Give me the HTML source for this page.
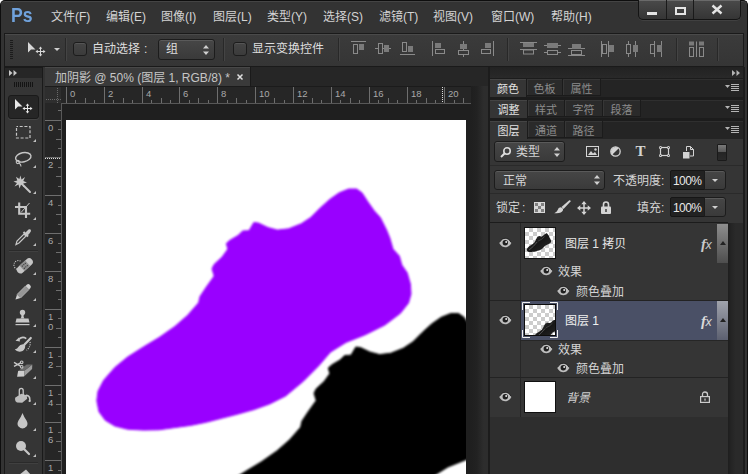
<!DOCTYPE html><html><head><meta charset="utf-8"><title>Photoshop</title><style>
*{box-sizing:border-box;margin:0;padding:0}
html,body{width:748px;height:474px;overflow:hidden;background:#fff}
body{position:relative;font-family:"Liberation Sans","Noto Sans CJK SC",sans-serif;font-size:12px;color:#d4d4d4;line-height:1}
.a{position:absolute}
.t{position:absolute;white-space:nowrap;line-height:16px;height:16px}
svg{position:absolute;overflow:visible}
.menu .t{color:#d4d4d4;font-size:12px}
.ptab{position:absolute;height:17px;line-height:20px;overflow:hidden;font-size:11px;text-align:center;color:#8c8c8c;background:#2a2a2a;border:1px solid #1b1b1b;border-top:none;border-left:none;box-shadow:inset 1px 1px 0 #363636}
.ptab.on{background:#353535;color:#e2e2e2;height:18px;border-bottom:none;box-shadow:inset 0 1px 0 #444}
.prow{position:absolute;left:490px;width:253px;height:18px;background:#242424;box-shadow:inset 0 1px 0 #2f2f2f}
.sep{position:absolute;width:1px;background:#282828;box-shadow:1px 0 0 #444}
.cb{position:absolute;width:14px;height:14px;border-radius:3px;background:linear-gradient(#454545,#3b3b3b);border:1px solid #1c1c1c;box-shadow:inset 0 1px 0 #555}
.dd{position:absolute;border-radius:3px;background:linear-gradient(#464646,#3a3a3a);border:1px solid #1c1c1c;box-shadow:inset 0 1px 0 #5a5a5a}
.inp{position:absolute;background:#222;border:1px solid #161616;border-radius:2px 0 0 2px}
</style></head><body>
<div class="a" style="left:0;top:0;width:748px;height:474px;background:#333;border:1px solid #0e0e0e;border-bottom:none;border-radius:5px 5px 0 0;box-shadow:inset 0 1px 0 #444"></div>
<div class="t" style="left:11px;top:2.500px;font-size:21px;line-height:24px;height:24px;font-weight:bold;color:#70a2dc;transform:scaleX(0.84);transform-origin:0 0">Ps</div>
<div class="menu">
<div class="t" style="left:51px;top:9px">文件(F)</div>
<div class="t" style="left:106px;top:9px">编辑(E)</div>
<div class="t" style="left:161px;top:9px">图像(I)</div>
<div class="t" style="left:213px;top:9px">图层(L)</div>
<div class="t" style="left:267px;top:9px">类型(Y)</div>
<div class="t" style="left:323px;top:9px">选择(S)</div>
<div class="t" style="left:379px;top:9px">滤镜(T)</div>
<div class="t" style="left:433px;top:9px">视图(V)</div>
<div class="t" style="left:491px;top:9px">窗口(W)</div>
<div class="t" style="left:551px;top:9px">帮助(H)</div>
</div>
<div class="a" style="left:638px;top:0;width:103px;height:20px;background:linear-gradient(#4a4a4a,#353535);border:1px solid #141414;border-top:none;border-radius:0 0 5px 5px;box-shadow:inset 0 1px 0 #6a6a6a,0 1px 0 #404040"></div>
<div class="a" style="left:666px;top:0;width:1px;height:19px;background:#1a1a1a"></div>
<div class="a" style="left:693px;top:0;width:1px;height:19px;background:#1a1a1a"></div>
<div class="a" style="left:647px;top:11.500px;width:10px;height:3px;background:#e4e4e4"></div>
<div class="a" style="left:675px;top:7px;width:11px;height:8px;border:2px solid #e4e4e4;border-top-width:2.500px"></div>
<svg style="left:711px;top:5.300px" width="12" height="9" viewBox="0 0 12 9"><path d="M1.500 0.500 L10.500 8.500 M10.500 0.500 L1.500 8.500" stroke="#e4e4e4" stroke-width="2.400"/></svg>
<div class="a" style="left:4px;top:33px;width:740px;height:34px;background:linear-gradient(#3b3b3b,#353535);border:1px solid #1a1a1a;box-shadow:inset 0 1px 0 #4a4a4a"></div>
<div class="a" style="left:10px;top:40px;width:3px;height:20px;background:repeating-linear-gradient(#1c1c1c 0 1px,transparent 1px 2px)"></div>
<svg style="left:27px;top:42px" width="20" height="16" viewBox="0 0 20 16"><path d="M1 0 L1 10.500 L4 7.500 L8.500 7.500 Z" fill="#d8d8d8"/><path d="M13.5 5.500 V13.500 M9.500 9.500 H17.500" stroke="#d8d8d8" stroke-width="1" fill="none"/><path d="M13.500 4.500 L11.700 6.800 H15.300 Z M13.500 14.500 L11.700 12.200 H15.300 Z M8.500 9.500 L10.800 7.700 V11.300 Z M18.500 9.500 L16.200 7.700 V11.300 Z" fill="#d8d8d8"/></svg>
<svg style="left:54px;top:48px" width="6" height="3"><path d="M0 0 H6 L3 3 Z" fill="#d0d0d0"/></svg>
<div class="sep" style="left:65px;top:38px;height:23px"></div>
<div class="cb" style="left:73px;top:42px"></div>
<div class="t" style="left:92px;top:41px;color:#dedede">自动选择<span style="margin-left:4px">:</span></div>
<div class="dd" style="left:158px;top:39px;width:57px;height:21px"></div>
<div class="t" style="left:166px;top:41px;color:#dedede">组</div>
<svg style="left:203px;top:45px" width="6" height="10"><path d="M0 3.5 L3 0 L6 3.5 Z M0 6.5 L3 10 L6 6.5 Z" fill="#d0d0d0"/></svg>
<div class="sep" style="left:223px;top:38px;height:23px"></div>
<div class="cb" style="left:233px;top:42px"></div>
<div class="t" style="left:252px;top:41px;color:#dedede">显示变换控件</div>
<div class="sep" style="left:338px;top:38px;height:23px"></div>
<svg style="left:351px;top:41px" width="15" height="14" viewBox="0 0 15 14"><path d="M0 0.5 H15" stroke="#8a8a8a"/><rect x="2.5" y="3.5" width="4" height="9" fill="none" stroke="#8a8a8a"/><rect x="8" y="3" width="5" height="6" fill="#7a7a7a"/></svg>
<svg style="left:375px;top:42px" width="16" height="12" viewBox="0 0 16 12"><path d="M0 6.5 H16" stroke="#8a8a8a"/><rect x="3.5" y="1.5" width="4" height="10" fill="#383838" stroke="#8a8a8a"/><rect x="9" y="3" width="5" height="7" fill="#7a7a7a"/></svg>
<svg style="left:400px;top:41px" width="15" height="14" viewBox="0 0 15 14"><path d="M0 13.5 H15" stroke="#8a8a8a"/><rect x="2.5" y="1.5" width="4" height="9" fill="none" stroke="#8a8a8a"/><rect x="8" y="5" width="5" height="6" fill="#7a7a7a"/></svg>
<svg style="left:432px;top:41px" width="14" height="15" viewBox="0 0 14 15"><path d="M0.5 0 V15" stroke="#8a8a8a"/><rect x="3" y="2" width="6" height="5" fill="#7a7a7a"/><rect x="3.5" y="8.500" width="9" height="4" fill="none" stroke="#8a8a8a"/></svg>
<svg style="left:457px;top:41px" width="12" height="16" viewBox="0 0 12 16"><path d="M6.5 0 V16" stroke="#8a8a8a"/><rect x="3" y="3" width="7" height="5" fill="#7a7a7a"/><rect x="1.5" y="9.500" width="10" height="4" fill="#383838" stroke="#8a8a8a"/></svg>
<svg style="left:480px;top:41px" width="14" height="15" viewBox="0 0 14 15"><path d="M13.5 0 V15" stroke="#8a8a8a"/><rect x="5" y="2" width="6" height="5" fill="#7a7a7a"/><rect x="1.5" y="8.500" width="9" height="4" fill="none" stroke="#8a8a8a"/></svg>
<div class="sep" style="left:507px;top:38px;height:23px"></div>
<svg style="left:520px;top:42px" width="17" height="13" viewBox="0 0 17 13"><path d="M0 0.5 H17" stroke="#8a8a8a"/><rect x="3" y="1" width="11" height="4" fill="#7a7a7a"/><path d="M0 7.5 H17" stroke="#8a8a8a"/><rect x="3.500" y="8" width="10" height="4" fill="none" stroke="#8a8a8a"/></svg>
<svg style="left:544px;top:42px" width="17" height="14" viewBox="0 0 17 14"><path d="M0 3.500 H17" stroke="#8a8a8a"/><rect x="3" y="1" width="11" height="5" fill="#7a7a7a"/><path d="M0 10.5 H17" stroke="#8a8a8a"/><rect x="3.500" y="8.5" width="10" height="4" fill="#383838" stroke="#8a8a8a"/></svg>
<svg style="left:568px;top:42px" width="17" height="14" viewBox="0 0 17 14"><path d="M0 6.500 H17" stroke="#8a8a8a"/><rect x="4" y="2" width="9" height="5" fill="#7a7a7a"/><path d="M0 13.5 H17" stroke="#8a8a8a"/><rect x="3.500" y="8.5" width="10" height="4" fill="none" stroke="#8a8a8a"/></svg>
<svg style="left:601px;top:41px" width="14" height="16" viewBox="0 0 14 16"><path d="M0.5 0 V16" stroke="#8a8a8a"/><rect x="1.500" y="3.500" width="4" height="9" fill="none" stroke="#8a8a8a"/><path d="M7.5 0 V16" stroke="#8a8a8a"/><rect x="8" y="4" width="5" height="7" fill="#7a7a7a"/></svg>
<svg style="left:625px;top:41px" width="14" height="16" viewBox="0 0 14 16"><path d="M3.500 0 V16" stroke="#8a8a8a"/><rect x="1.500" y="3.500" width="4" height="9" fill="#383838" stroke="#8a8a8a"/><path d="M10.5 0 V16" stroke="#8a8a8a"/><rect x="8" y="4" width="5" height="7" fill="#7a7a7a"/></svg>
<svg style="left:649px;top:41px" width="14" height="16" viewBox="0 0 14 16"><path d="M5.500 0 V16" stroke="#8a8a8a"/><rect x="1.500" y="3.500" width="4" height="9" fill="none" stroke="#8a8a8a"/><path d="M12.5 0 V16" stroke="#8a8a8a"/><rect x="8" y="4" width="5" height="7" fill="#7a7a7a"/></svg>
<div class="sep" style="left:676px;top:38px;height:23px"></div>
<svg style="left:689px;top:41px" width="16" height="16" viewBox="0 0 16 16"><rect x="0" y="0.500" width="5" height="4" fill="#7a7a7a"/><rect x="0.500" y="6.500" width="4" height="9" fill="none" stroke="#8a8a8a"/><path d="M7.500 0.500 V16" stroke="#8a8a8a"/><rect x="10" y="0.500" width="5" height="4" fill="#7a7a7a"/><rect x="10.500" y="6.500" width="4" height="9" fill="none" stroke="#8a8a8a"/></svg>
<div class="sep" style="left:717px;top:38px;height:23px"></div>
<div class="a" style="left:45px;top:67px;width:443px;height:19px;background:#262626"></div>
<div class="a" style="left:45px;top:67px;width:206px;height:19px;background:#3a3a3a;border-right:1px solid #1a1a1a;box-shadow:inset 0 1px 0 #484848"></div>
<div class="t" style="left:55px;top:70px;color:#c6c6c6">加阴影 @ 50% (图层 1, RGB/8) *</div>
<svg style="left:237px;top:74px" width="6" height="6"><path d="M0.500 0.500 L5.500 5.500 M5.500 0.500 L0.500 5.500" stroke="#e0e0e0" stroke-width="1.500"/></svg>
<div class="a" style="left:45px;top:86px;width:443px;height:388px;background:#1f1f1f"></div>
<div class="a" style="left:61px;top:86px;width:410px;height:18px;background:#262626;border-bottom:1px solid #585858"></div>
<div class="a" style="left:45px;top:103px;width:17px;height:371px;background:#262626;border-right:1px solid #585858"></div>
<div class="a" style="left:45px;top:86px;width:443px;height:1px;background:#1b1b1b"></div>
<div class="a" style="left:45px;top:87px;width:16px;height:16px;background:#2e2e2e"></div>
<svg style="left:0;top:0" width="748" height="474" viewBox="0 0 748 474"><path d="M66.5 87 V103" stroke="#6e6e6e"/><text x="70.0" y="96.500" font-size="9.5" fill="#a9a9a9" font-family='"Liberation Sans",sans-serif'>0</text><path d="M75.5 100 V103" stroke="#6e6e6e"/><path d="M85.5 98 V103" stroke="#6e6e6e"/><path d="M94.5 100 V103" stroke="#6e6e6e"/><path d="M104.5 87 V103" stroke="#6e6e6e"/><text x="108.0" y="96.500" font-size="9.5" fill="#a9a9a9" font-family='"Liberation Sans",sans-serif'>2</text><path d="M113.5 100 V103" stroke="#6e6e6e"/><path d="M123.5 98 V103" stroke="#6e6e6e"/><path d="M132.5 100 V103" stroke="#6e6e6e"/><path d="M142.5 87 V103" stroke="#6e6e6e"/><text x="146.0" y="96.500" font-size="9.5" fill="#a9a9a9" font-family='"Liberation Sans",sans-serif'>4</text><path d="M151.5 100 V103" stroke="#6e6e6e"/><path d="M161.5 98 V103" stroke="#6e6e6e"/><path d="M170.5 100 V103" stroke="#6e6e6e"/><path d="M179.5 87 V103" stroke="#6e6e6e"/><text x="183.0" y="96.500" font-size="9.5" fill="#a9a9a9" font-family='"Liberation Sans",sans-serif'>6</text><path d="M189.5 100 V103" stroke="#6e6e6e"/><path d="M198.5 98 V103" stroke="#6e6e6e"/><path d="M208.5 100 V103" stroke="#6e6e6e"/><path d="M217.5 87 V103" stroke="#6e6e6e"/><text x="221.0" y="96.500" font-size="9.5" fill="#a9a9a9" font-family='"Liberation Sans",sans-serif'>8</text><path d="M227.5 100 V103" stroke="#6e6e6e"/><path d="M236.5 98 V103" stroke="#6e6e6e"/><path d="M246.5 100 V103" stroke="#6e6e6e"/><path d="M255.5 87 V103" stroke="#6e6e6e"/><text x="259.0" y="96.500" font-size="9.5" fill="#a9a9a9" font-family='"Liberation Sans",sans-serif'>10</text><path d="M265.5 100 V103" stroke="#6e6e6e"/><path d="M274.5 98 V103" stroke="#6e6e6e"/><path d="M284.5 100 V103" stroke="#6e6e6e"/><path d="M293.5 87 V103" stroke="#6e6e6e"/><text x="297.0" y="96.500" font-size="9.5" fill="#a9a9a9" font-family='"Liberation Sans",sans-serif'>12</text><path d="M303.5 100 V103" stroke="#6e6e6e"/><path d="M312.5 98 V103" stroke="#6e6e6e"/><path d="M321.5 100 V103" stroke="#6e6e6e"/><path d="M331.5 87 V103" stroke="#6e6e6e"/><text x="335.0" y="96.500" font-size="9.5" fill="#a9a9a9" font-family='"Liberation Sans",sans-serif'>14</text><path d="M340.5 100 V103" stroke="#6e6e6e"/><path d="M350.5 98 V103" stroke="#6e6e6e"/><path d="M359.5 100 V103" stroke="#6e6e6e"/><path d="M369.5 87 V103" stroke="#6e6e6e"/><text x="373.0" y="96.500" font-size="9.5" fill="#a9a9a9" font-family='"Liberation Sans",sans-serif'>16</text><path d="M378.5 100 V103" stroke="#6e6e6e"/><path d="M388.5 98 V103" stroke="#6e6e6e"/><path d="M397.5 100 V103" stroke="#6e6e6e"/><path d="M407.5 87 V103" stroke="#6e6e6e"/><text x="411.0" y="96.500" font-size="9.5" fill="#a9a9a9" font-family='"Liberation Sans",sans-serif'>18</text><path d="M416.5 100 V103" stroke="#6e6e6e"/><path d="M426.5 98 V103" stroke="#6e6e6e"/><path d="M435.5 100 V103" stroke="#6e6e6e"/><path d="M444.5 87 V103" stroke="#6e6e6e"/><text x="448.0" y="96.500" font-size="9.5" fill="#a9a9a9" font-family='"Liberation Sans",sans-serif'>20</text><path d="M454.5 100 V103" stroke="#6e6e6e"/><path d="M463.5 98 V103" stroke="#6e6e6e"/><path d="M45 120.5 H61" stroke="#6e6e6e"/><text x="48" y="130.5" font-size="9.5" fill="#a9a9a9" font-family='"Liberation Sans",sans-serif'>0</text><path d="M58 129.5 H61" stroke="#6e6e6e"/><path d="M56 139.5 H61" stroke="#6e6e6e"/><path d="M58 148.5 H61" stroke="#6e6e6e"/><path d="M45 157.5 H61" stroke="#6e6e6e"/><text x="48" y="167.5" font-size="9.5" fill="#a9a9a9" font-family='"Liberation Sans",sans-serif'>2</text><path d="M58 167.5 H61" stroke="#6e6e6e"/><path d="M56 176.5 H61" stroke="#6e6e6e"/><path d="M58 186.5 H61" stroke="#6e6e6e"/><path d="M45 195.5 H61" stroke="#6e6e6e"/><text x="48" y="205.5" font-size="9.5" fill="#a9a9a9" font-family='"Liberation Sans",sans-serif'>4</text><path d="M58 205.5 H61" stroke="#6e6e6e"/><path d="M56 214.5 H61" stroke="#6e6e6e"/><path d="M58 224.5 H61" stroke="#6e6e6e"/><path d="M45 233.5 H61" stroke="#6e6e6e"/><text x="48" y="243.5" font-size="9.5" fill="#a9a9a9" font-family='"Liberation Sans",sans-serif'>6</text><path d="M58 243.5 H61" stroke="#6e6e6e"/><path d="M56 252.5 H61" stroke="#6e6e6e"/><path d="M58 262.5 H61" stroke="#6e6e6e"/><path d="M45 271.5 H61" stroke="#6e6e6e"/><text x="48" y="281.5" font-size="9.5" fill="#a9a9a9" font-family='"Liberation Sans",sans-serif'>8</text><path d="M58 281.5 H61" stroke="#6e6e6e"/><path d="M56 290.5 H61" stroke="#6e6e6e"/><path d="M58 299.5 H61" stroke="#6e6e6e"/><path d="M45 309.5 H61" stroke="#6e6e6e"/><text x="48" y="319.5" font-size="9.5" fill="#a9a9a9" font-family='"Liberation Sans",sans-serif'>1</text><text x="48" y="329.5" font-size="9.5" fill="#a9a9a9" font-family='"Liberation Sans",sans-serif'>0</text><path d="M58 318.5 H61" stroke="#6e6e6e"/><path d="M56 328.5 H61" stroke="#6e6e6e"/><path d="M58 337.5 H61" stroke="#6e6e6e"/><path d="M45 347.5 H61" stroke="#6e6e6e"/><text x="48" y="357.5" font-size="9.5" fill="#a9a9a9" font-family='"Liberation Sans",sans-serif'>1</text><text x="48" y="367.5" font-size="9.5" fill="#a9a9a9" font-family='"Liberation Sans",sans-serif'>2</text><path d="M58 356.5 H61" stroke="#6e6e6e"/><path d="M56 366.5 H61" stroke="#6e6e6e"/><path d="M58 375.5 H61" stroke="#6e6e6e"/><path d="M45 385.5 H61" stroke="#6e6e6e"/><text x="48" y="395.5" font-size="9.5" fill="#a9a9a9" font-family='"Liberation Sans",sans-serif'>1</text><text x="48" y="405.5" font-size="9.5" fill="#a9a9a9" font-family='"Liberation Sans",sans-serif'>4</text><path d="M58 394.5 H61" stroke="#6e6e6e"/><path d="M56 404.5 H61" stroke="#6e6e6e"/><path d="M58 413.5 H61" stroke="#6e6e6e"/><path d="M45 422.5 H61" stroke="#6e6e6e"/><text x="48" y="432.5" font-size="9.5" fill="#a9a9a9" font-family='"Liberation Sans",sans-serif'>1</text><text x="48" y="442.5" font-size="9.5" fill="#a9a9a9" font-family='"Liberation Sans",sans-serif'>6</text><path d="M58 432.5 H61" stroke="#6e6e6e"/><path d="M56 441.5 H61" stroke="#6e6e6e"/><path d="M58 451.5 H61" stroke="#6e6e6e"/><path d="M45 460.5 H61" stroke="#6e6e6e"/><text x="48" y="470.5" font-size="9.5" fill="#a9a9a9" font-family='"Liberation Sans",sans-serif'>1</text><text x="48" y="480.5" font-size="9.5" fill="#a9a9a9" font-family='"Liberation Sans",sans-serif'>8</text><path d="M58 470.5 H61" stroke="#6e6e6e"/><path d="M56 479.5 H61" stroke="#6e6e6e"/><path d="M58 489.5 H61" stroke="#6e6e6e"/><path d="M58 110.5 H61" stroke="#6e6e6e"/><path d="M46 99.500 H61" stroke="#6a6a6a" stroke-dasharray="1 1"/><path d="M57.500 88 V103" stroke="#6a6a6a" stroke-dasharray="1 1"/><path d="M45 158.500 H61" stroke="#ddd" stroke-dasharray="1 1"/><path d="M442.500 87 V103" stroke="#ddd" stroke-dasharray="1 1"/></svg>
<div class="a" style="left:471px;top:86px;width:17px;height:388px;background:linear-gradient(90deg,#1f1f1f 0,#222 35%,#2d2d2d 75%,#2d2d2d 100%)"></div>
<div class="a" style="left:66px;top:120px;width:400px;height:354px;background:#fff;overflow:hidden">
<svg style="left:0;top:0" width="400" height="354" viewBox="0 0 400 354"><defs><filter id="bl" x="-5%" y="-5%" width="110%" height="110%"><feGaussianBlur stdDeviation="0.9"/></filter></defs>
<path d="M134.0 176.5 L140.3 167.0 L148.2 156.0 L146.0 148.7 L148.2 144.3 L156.1 137.0 L161.8 129.1 L160.3 123.4 L164.0 120.2 L172.0 115.5 L176.7 111.0 L183.0 110.7 L187.8 102.5 L192.5 103.1 L202.0 107.6 L211.5 110.1 L222.6 108.8 L235.2 103.8 L244.7 97.5 L254.2 88.0 L263.7 79.4 L273.2 72.8 L282.7 69.0 L290.6 69.0 L296.0 72.8 L301.7 81.6 L308.0 90.5 L314.3 97.5 L320.6 110.1 L323.8 118.0 L327.0 129.1 L333.3 136.0 L335.8 144.9 L341.2 152.8 L344.4 163.9 L345.0 174.0 L342.5 183.0 L334.4 193.3 L318.9 205.0 L299.4 214.7 L280.0 222.4 L264.5 232.1 L252.8 245.7 L237.3 261.3 L219.6 276.0 L203.8 283.9 L188.0 289.6 L172.2 294.0 L156.4 298.1 L140.5 302.2 L124.7 305.4 L108.9 307.6 L93.1 309.8 L77.3 310.1 L61.5 309.2 L48.8 306.0 L39.3 300.3 L33.0 291.8 L30.8 280.7 L32.0 271.2 L37.7 260.2 L48.8 247.5 L61.5 237.1 L77.3 227.0 L93.1 217.5 L108.9 206.4 L121.6 195.3 L132.6 182.7 Z" fill="#000" stroke="#000" stroke-width="1" stroke-linejoin="round" transform="translate(102 124.5)" filter="url(#bl)"/>
<path d="M134.0 176.5 L140.3 167.0 L148.2 156.0 L146.0 148.7 L148.2 144.3 L156.1 137.0 L161.8 129.1 L160.3 123.4 L164.0 120.2 L172.0 115.5 L176.7 111.0 L183.0 110.7 L187.8 102.5 L192.5 103.1 L202.0 107.6 L211.5 110.1 L222.6 108.8 L235.2 103.8 L244.7 97.5 L254.2 88.0 L263.7 79.4 L273.2 72.8 L282.7 69.0 L290.6 69.0 L296.0 72.8 L301.7 81.6 L308.0 90.5 L314.3 97.5 L320.6 110.1 L323.8 118.0 L327.0 129.1 L333.3 136.0 L335.8 144.9 L341.2 152.8 L344.4 163.9 L345.0 174.0 L342.5 183.0 L334.4 193.3 L318.9 205.0 L299.4 214.7 L280.0 222.4 L264.5 232.1 L252.8 245.7 L237.3 261.3 L219.6 276.0 L203.8 283.9 L188.0 289.6 L172.2 294.0 L156.4 298.1 L140.5 302.2 L124.7 305.4 L108.9 307.6 L93.1 309.8 L77.3 310.1 L61.5 309.2 L48.8 306.0 L39.3 300.3 L33.0 291.8 L30.8 280.7 L32.0 271.2 L37.7 260.2 L48.8 247.5 L61.5 237.1 L77.3 227.0 L93.1 217.5 L108.9 206.4 L121.6 195.3 L132.6 182.7 Z" fill="#9900ff" stroke="#9900ff" stroke-width="1" stroke-linejoin="round" filter="url(#bl)"/>
</svg></div>
<div class="a" style="left:4px;top:67px;width:39px;height:407px;background:#353535;border:1px solid #1a1a1a;border-bottom:none"></div>
<div class="a" style="left:5px;top:68px;width:37px;height:10px;background:#262626"></div>
<svg style="left:9px;top:69.500px" width="8" height="6"><path d="M0 0 L3.500 3 L0 6 Z M4.500 0 L8 3 L4.500 6 Z" fill="#c8c8c8"/></svg>
<div class="a" style="left:14px;top:82px;width:20px;height:5px;background:repeating-linear-gradient(90deg,#141414 0 1px,transparent 1px 2px)"></div>
<div class="a" style="left:8px;top:95px;width:31px;height:24px;background:#262626;border:1px solid #1a1a1a;border-radius:3px;box-shadow:0 1px 0 #444"></div>
<svg style="left:14px;top:99px" width="20" height="16" viewBox="0 0 20 16"><path d="M1 0 L1 10.500 L4 7.500 L8.500 7.500 Z" fill="#e8e8e8"/><path d="M13.5 5.500 V13.500 M9.500 9.500 H17.500" stroke="#e8e8e8" stroke-width="1" fill="none"/><path d="M13.500 4.500 L11.700 6.800 H15.300 Z M13.500 14.500 L11.700 12.200 H15.300 Z M8.500 9.500 L10.800 7.700 V11.300 Z M18.500 9.500 L16.200 7.700 V11.300 Z" fill="#e8e8e8"/></svg>
<svg style="left:13px;top:122px" width="20" height="20" viewBox="0 0 20 20"><rect x="3.500" y="4.500" width="13.500" height="11.500" fill="none" stroke="#c6c6c6" stroke-width="1.200" stroke-dasharray="3 1.700" stroke-dashoffset="1.500"/></svg><svg style="left:33px;top:139px" width="3" height="3"><path d="M3 0 V3 H0 Z" fill="#c0c0c0"/></svg>
<svg style="left:13px;top:148px" width="20" height="20" viewBox="0 0 20 20"><ellipse cx="10.300" cy="9.300" rx="7.800" ry="4.600" transform="rotate(-12 10.300 9.300)" fill="none" stroke="#c6c6c6" stroke-width="1.400"/><circle cx="4.800" cy="14" r="1.600" fill="none" stroke="#c6c6c6" stroke-width="1.100"/><path d="M6 15.300 Q8 16 8 18.500" fill="none" stroke="#c6c6c6" stroke-width="1.100"/></svg><svg style="left:33px;top:165px" width="3" height="3"><path d="M3 0 V3 H0 Z" fill="#c0c0c0"/></svg>
<svg style="left:13px;top:174px" width="20" height="20" viewBox="0 0 20 20"><path d="M10.500 11.500 L17 18" stroke="#c6c6c6" stroke-width="2" stroke-linecap="round"/><path d="M7.500 1.500 L8.500 5.500 L12 3 L10.300 7 L14 8.500 L10.300 9.500 L11.500 13 L8 10.800 L6.500 14.500 L5.500 10.500 L1.500 12.500 L4 9 L0.500 7.500 L4.300 6.500 L3 2.800 L6.300 5 Z" fill="#c6c6c6"/></svg><svg style="left:33px;top:191px" width="3" height="3"><path d="M3 0 V3 H0 Z" fill="#c0c0c0"/></svg>
<svg style="left:13px;top:200px" width="20" height="20" viewBox="0 0 20 20"><path d="M6.200 2.500 V13.700 H17.200" fill="none" stroke="#c6c6c6" stroke-width="2.100"/><path d="M2 7 H13 V18" fill="none" stroke="#c6c6c6" stroke-width="2.100"/><path d="M8 12.500 L16.500 3" stroke="#c6c6c6" stroke-width="1"/></svg><svg style="left:33px;top:217px" width="3" height="3"><path d="M3 0 V3 H0 Z" fill="#c0c0c0"/></svg>
<svg style="left:13px;top:227px" width="20" height="20" viewBox="0 0 20 20"><path d="M3 17.500 L4 14 L11 7 L13 9 L6 16 Z" fill="none" stroke="#c6c6c6" stroke-width="1.200"/><path d="M10.500 5 L15 9.500" stroke="#c6c6c6" stroke-width="2"/><path d="M12 6 L15.500 2.500 Q17.500 1.500 18 3.500 Q18 5 14.500 8.500 Z" fill="#c6c6c6"/></svg><svg style="left:33px;top:243px" width="3" height="3"><path d="M3 0 V3 H0 Z" fill="#c0c0c0"/></svg>
<div class="a" style="left:9px;top:250px;width:29px;height:1px;background:#2a2a2a;box-shadow:0 1px 0 #404040"></div>
<svg style="left:13px;top:255px" width="20" height="20" viewBox="0 0 20 20"><g transform="rotate(-42 11.800 10.800)"><rect x="2.300" y="7.100" width="19" height="7.400" rx="3.700" fill="#c4c4c4"/><rect x="8" y="7.100" width="7.600" height="7.400" fill="#8e8e8e"/><circle cx="9.800" cy="9.300" r="0.600" fill="#353535"/><circle cx="11.800" cy="9.300" r="0.600" fill="#353535"/><circle cx="13.800" cy="9.300" r="0.600" fill="#353535"/><circle cx="9.800" cy="12.300" r="0.600" fill="#353535"/><circle cx="11.800" cy="12.300" r="0.600" fill="#353535"/><circle cx="13.800" cy="12.300" r="0.600" fill="#353535"/></g><path d="M3.900 14.300 A4.500 4.500 0 1 1 8.300 6.600" fill="none" stroke="#c6c6c6" stroke-width="1.100" stroke-dasharray="1.100 1.100"/></svg><svg style="left:33px;top:272px" width="3" height="3"><path d="M3 0 V3 H0 Z" fill="#c0c0c0"/></svg>
<svg style="left:13px;top:282px" width="20" height="20" viewBox="0 0 20 20"><path d="M4 12.500 L12.500 4 L16 7.500 L7.500 16 Z" fill="#969696"/><path d="M2.500 17.500 L4 12.500 L7.500 16 Z" fill="#d0d0d0"/><path d="M12.500 4 L14 2.500 Q15.500 1.500 17 3 Q18.500 4.500 17.500 6 L16 7.500 Z" fill="#d0d0d0"/><path d="M4 12.500 L12.500 4" stroke="#bdbdbd" stroke-width="0.800"/><path d="M7.500 16 L16 7.500" stroke="#bdbdbd" stroke-width="0.800"/></svg><svg style="left:33px;top:298px" width="3" height="3"><path d="M3 0 V3 H0 Z" fill="#c0c0c0"/></svg>
<svg style="left:13px;top:308px" width="20" height="20" viewBox="0 0 20 20"><circle cx="9.500" cy="4.500" r="2.700" fill="#c6c6c6"/><path d="M8.300 6 Q8.800 9 7.500 10.500 H11.500 Q10.200 9 10.700 6 Z" fill="#c6c6c6"/><path d="M3.500 10.500 H15.500 L16.500 14.500 H2.500 Z" fill="#c6c6c6"/><rect x="2.500" y="16" width="14" height="1.200" fill="#c6c6c6"/></svg><svg style="left:33px;top:324px" width="3" height="3"><path d="M3 0 V3 H0 Z" fill="#c0c0c0"/></svg>
<svg style="left:13px;top:334px" width="20" height="20" viewBox="0 0 20 20"><path d="M17.800 4 L11.800 10.300 L10.600 11.800" stroke="#c6c6c6" stroke-width="2.200" stroke-linecap="round" fill="none"/><path d="M12.300 12.500 L10 10.200 Q6.800 10.300 5.500 12.800 Q4.500 14.800 1.800 15.600 Q4 18.200 8 17.600 Q11.500 16.800 12.300 12.500 Z" fill="#c6c6c6"/><path d="M13.300 4.600 Q9.500 1.800 5.800 5.300" fill="none" stroke="#c6c6c6" stroke-width="1.600"/><path d="M2.500 6.800 L6.200 3.200 L7 7.500 Z" fill="#c6c6c6"/><path d="M17 8 Q18 12.500 13.500 16.300" fill="none" stroke="#c6c6c6" stroke-width="1.200" stroke-dasharray="1.100 1.100"/></svg><svg style="left:33px;top:350px" width="3" height="3"><path d="M3 0 V3 H0 Z" fill="#c0c0c0"/></svg>
<svg style="left:13px;top:359px" width="20" height="20" viewBox="0 0 20 20"><path d="M5.100 12 L11.700 11.500 L11 17.400 L4.100 17.800 Z" fill="#cdcdcd"/><path d="M11.700 11.500 L19.300 5.600 L19.100 10 L11 17.400 Z" fill="#9c9c9c"/><path d="M5.100 12 L11.700 11.500 L19.300 5.600 L13.700 5.600 Z" fill="#6c6c6c"/><circle cx="8.700" cy="3.300" r="1.300" fill="none" stroke="#c6c6c6" stroke-width="1.100"/><circle cx="8.700" cy="7.800" r="1.300" fill="none" stroke="#c6c6c6" stroke-width="1.100"/><path d="M7.600 3.900 L1 7.400 M7.600 7.200 L1 3.400" stroke="#c6c6c6" stroke-width="1.400"/></svg><svg style="left:33px;top:376px" width="3" height="3"><path d="M3 0 V3 H0 Z" fill="#c0c0c0"/></svg>
<svg style="left:13px;top:386px" width="20" height="20" viewBox="0 0 20 20"><path d="M2.100 11.700 L8.200 7.700 L13.700 9.200 L14.200 12.700 L9.200 16.800 L4 16.500 Q2 15.500 2.100 13.700 Z" fill="#bdbdbd"/><path d="M6.300 9.500 V4.500 Q6.300 2.300 8.200 2.300 Q10.200 2.300 10.200 4.500 V10.200" fill="none" stroke="#c6c6c6" stroke-width="1.300"/><path d="M13.500 9.300 Q16.800 9.800 16.800 13 V15" fill="none" stroke="#c6c6c6" stroke-width="1.500" stroke-linecap="round"/><circle cx="16.600" cy="15" r="1.100" fill="#c6c6c6"/></svg><svg style="left:33px;top:402px" width="3" height="3"><path d="M3 0 V3 H0 Z" fill="#c0c0c0"/></svg>
<svg style="left:11.5px;top:411px" width="20" height="20" viewBox="0 0 20 20"><path d="M10.500 2 Q12 6 14.500 9.500 Q16.500 13 14.500 15.500 Q12.500 17.500 10.500 17.500 Q8.500 17.500 6.500 15.500 Q4.500 13 6.500 9.500 Q9 6 10.500 2 Z" fill="#c6c6c6"/></svg><svg style="left:33px;top:428px" width="3" height="3"><path d="M3 0 V3 H0 Z" fill="#c0c0c0"/></svg>
<svg style="left:13px;top:438px" width="20" height="20" viewBox="0 0 20 20"><circle cx="8" cy="8" r="5" fill="#c6c6c6"/><path d="M11.500 11.500 L16 16" stroke="#c6c6c6" stroke-width="2.200" stroke-linecap="round"/></svg><svg style="left:33px;top:454px" width="3" height="3"><path d="M3 0 V3 H0 Z" fill="#c0c0c0"/></svg>
<div class="a" style="left:9px;top:462px;width:29px;height:1px;background:#2a2a2a;box-shadow:0 1px 0 #404040"></div>
<svg style="left:13px;top:467px" width="20" height="8" viewBox="0 0 20 8"><path d="M6 8 L13 2.500 L18 8 Z" fill="#c6c6c6"/></svg>
<div class="a" style="left:488px;top:67px;width:257px;height:407px;background:#1c1c1c"></div>
<div class="a" style="left:490px;top:67px;width:253px;height:11px;background:linear-gradient(#222,#292929)"></div>
<svg style="left:732px;top:69.500px" width="8" height="6"><path d="M0 0 L3.500 3 L0 6 Z M4.500 0 L8 3 L4.500 6 Z" fill="#b4b4b4"/></svg>
<div class="prow" style="top:79px"></div><div class="ptab on" style="left:490px;top:79px;width:37px">颜色</div><div class="ptab" style="left:527px;top:79px;width:36px">色板</div><div class="ptab" style="left:563px;top:79px;width:38px">属性</div><svg style="left:725px;top:83px" width="14" height="8"><path d="M0 2 H5 L2.500 5 Z" fill="#b4b4b4"/><path d="M6 1.500 H14 M6 3.500 H14 M6 5.500 H14 M6 7.500 H14" stroke="#b4b4b4"/></svg>
<div class="prow" style="top:100px"></div><div class="ptab on" style="left:490px;top:100px;width:38px">调整</div><div class="ptab" style="left:528px;top:100px;width:37px">样式</div><div class="ptab" style="left:565px;top:100px;width:38px">字符</div><div class="ptab" style="left:603px;top:100px;width:38px">段落</div><svg style="left:725px;top:104px" width="14" height="8"><path d="M0 2 H5 L2.500 5 Z" fill="#b4b4b4"/><path d="M6 1.500 H14 M6 3.500 H14 M6 5.500 H14 M6 7.500 H14" stroke="#b4b4b4"/></svg>
<div class="prow" style="top:121px"></div><div class="ptab on" style="left:490px;top:121px;width:38px">图层</div><div class="ptab" style="left:528px;top:121px;width:37px">通道</div><div class="ptab" style="left:565px;top:121px;width:38px">路径</div><svg style="left:725px;top:125px" width="14" height="8"><path d="M0 2 H5 L2.500 5 Z" fill="#b4b4b4"/><path d="M6 1.500 H14 M6 3.500 H14 M6 5.500 H14 M6 7.500 H14" stroke="#b4b4b4"/></svg>
<div class="a" style="left:490px;top:139px;width:253px;height:84px;background:#353535"></div>
<div class="dd" style="left:494px;top:141px;width:71px;height:21px"></div>
<svg style="left:500px;top:146px" width="12" height="12"><circle cx="7" cy="5" r="3.2" fill="none" stroke="#ddd" stroke-width="1.600"/><path d="M4.500 7.500 L1 11" stroke="#ddd" stroke-width="2"/></svg>
<div class="t" style="left:516px;top:144px;color:#d4d4d4">类型</div>
<svg style="left:554px;top:147px" width="6" height="10"><path d="M0 3.500 L3 0 L6 3.500 Z M0 6.500 L3 10 L6 6.500 Z" fill="#d0d0d0"/></svg>
<svg style="left:586px;top:146px" width="13" height="11" viewBox="0 0 13 11"><rect x="0.5" y="0.5" width="12" height="10" fill="none" stroke="#d4d4d4"/><path d="M2 9 L5 5 L7 7.500 L9 6 L11 9 Z" fill="#d4d4d4"/><circle cx="9.500" cy="3.500" r="1.2" fill="#d4d4d4"/></svg>
<svg style="left:610px;top:146px" width="11" height="11" viewBox="0 0 11 11"><circle cx="5.500" cy="5.500" r="4.700" fill="none" stroke="#d4d4d4" stroke-width="1.3"/><path d="M2.200 8.800 A4.700 4.700 0 0 1 8.800 2.200 Z" fill="#d4d4d4"/></svg>
<div class="t" style="left:635.500px;top:143px;font-family:'Liberation Serif',serif;font-weight:bold;font-size:15px;color:#d4d4d4">T</div>
<svg style="left:659px;top:146px" width="11" height="11" viewBox="0 0 11 11"><rect x="1.500" y="1.500" width="8" height="8" fill="none" stroke="#d4d4d4" stroke-width="1.200"/><circle cx="1.500" cy="1.500" r="1.500" fill="#d4d4d4"/><circle cx="9.500" cy="1.500" r="1.500" fill="#d4d4d4"/><circle cx="1.500" cy="9.500" r="1.500" fill="#d4d4d4"/><circle cx="9.500" cy="9.500" r="1.500" fill="#d4d4d4"/><circle cx="1.500" cy="1.500" r="0.600" fill="#353535"/><circle cx="9.500" cy="1.500" r="0.600" fill="#353535"/><circle cx="1.500" cy="9.500" r="0.600" fill="#353535"/><circle cx="9.500" cy="9.500" r="0.600" fill="#353535"/></svg>
<svg style="left:683px;top:146px" width="11" height="13" viewBox="0 0 11 13"><path d="M3.500 5 V0.500 H7.500 L10.500 3.500 V10 H7" fill="none" stroke="#d4d4d4"/><path d="M7.500 0.500 V3.500 H10.500" fill="none" stroke="#d4d4d4"/><rect x="0" y="6" width="6.500" height="6.500" fill="#d4d4d4"/></svg>
<div class="a" style="left:717px;top:144px;width:10px;height:17px;background:linear-gradient(#7a7a7a 0,#585858 45%,#242424 45%,#2a2a2a 100%);border:1px solid #1a1a1a;border-radius:1px"></div>
<div class="a" style="left:490px;top:165px;width:253px;height:1px;background:#2a2a2a"></div>
<div class="dd" style="left:494px;top:170px;width:111px;height:20px"></div>
<div class="t" style="left:503px;top:173px;color:#d4d4d4">正常</div>
<svg style="left:594px;top:175px" width="6" height="10"><path d="M0 3.500 L3 0 L6 3.500 Z M0 6.500 L3 10 L6 6.500 Z" fill="#d0d0d0"/></svg>
<div class="t" style="left:613px;top:173px;color:#d4d4d4">不透明度:</div>
<div class="inp" style="left:670px;top:170px;width:35px;height:20px"></div>
<div class="t" style="left:673px;top:173px;color:#e8e8e8;letter-spacing:-0.55px">100%</div>
<div class="dd" style="left:704px;top:170px;width:22px;height:20px;border-radius:0 3px 3px 0"></div>
<svg style="left:712px;top:178.500px" width="6" height="3"><path d="M0 0 H6 L3 3 Z" fill="#d0d0d0"/></svg>
<div class="a" style="left:490px;top:193px;width:253px;height:1px;background:#2a2a2a"></div>
<div class="t" style="left:496px;top:200px;color:#d4d4d4">锁定<span style="margin-left:2px">:</span></div>
<svg style="left:534px;top:202px" width="11" height="11" viewBox="0 0 11 11"><rect width="11" height="11" fill="#d8d8d8"/><rect x="1" y="1" width="3" height="3" fill="#808080"/><rect x="1" y="7" width="3" height="3" fill="#808080"/><rect x="4" y="4" width="3" height="3" fill="#808080"/><rect x="7" y="1" width="3" height="3" fill="#808080"/><rect x="7" y="7" width="3" height="3" fill="#808080"/></svg>
<svg style="left:554px;top:200px" width="17" height="14" viewBox="0 0 17 14"><path d="M15.300 0.300 Q16.800 0 16.500 1.500 L9.500 9 L7.500 7 Z" fill="#d4d4d4"/><path d="M6.500 7.300 Q9.500 8 9 10.300 Q7.500 14 0.300 13.200 Q3.500 11.500 3.800 9.800 Q4.300 7.300 6.500 7.300 Z" fill="#d4d4d4"/></svg>
<svg style="left:576.5px;top:200.5px" width="14" height="14" viewBox="0 0 14 14"><path d="M7 1.500 V12.500 M1.500 7 H12.500" stroke="#d4d4d4" stroke-width="1.500"/><path d="M7 0 L4.300 3.300 H9.700 Z M7 14 L4.300 10.700 H9.700 Z M0 7 L3.300 4.300 V9.700 Z M14 7 L10.700 4.300 V9.700 Z" fill="#d4d4d4"/></svg>
<svg style="left:601px;top:201px" width="10" height="13" viewBox="0 0 10 13"><path d="M2.500 6 V3.500 Q2.500 1 5 1 Q7.500 1 7.500 3.500 V6" fill="none" stroke="#d4d4d4" stroke-width="1.600"/><rect x="0" y="5.500" width="10" height="7.500" rx="1" fill="#d4d4d4"/><rect x="4.300" y="8" width="1.4" height="3" fill="#353535"/></svg>
<div class="t" style="left:637px;top:200px;color:#d4d4d4">填充:</div>
<div class="inp" style="left:670px;top:197px;width:35px;height:20px"></div>
<div class="t" style="left:673px;top:200px;color:#e8e8e8;letter-spacing:-0.55px">100%</div>
<div class="dd" style="left:704px;top:197px;width:22px;height:20px;border-radius:0 3px 3px 0"></div>
<svg style="left:712px;top:205.500px" width="6" height="3"><path d="M0 0 H6 L3 3 Z" fill="#d0d0d0"/></svg>
<div class="a" style="left:490px;top:222px;width:238px;height:252px;background:#2e2e2e;border-top:1px solid #1c1c1c"></div>
<div class="a" style="left:728px;top:223px;width:15px;height:251px;background:linear-gradient(90deg,#1e1e1e 0,#242424 20%,#2a2a2a 50%,#2a2a2a 100%)"></div>
<div class="a" style="left:490px;top:223px;width:31px;height:78px;background:#353535;border-right:1px solid #262626"></div><div class="a" style="left:521px;top:223px;width:207px;height:78px;background:#353535"></div>
<svg style="left:498.7px;top:237.8px" width="13" height="10" viewBox="0 0 13 10"><path d="M0.200 5 C2 1.200 4.500 0.500 6.300 0.500 C8.100 0.500 10.600 1.200 12.400 5 C10.600 8.400 8.100 9.300 6.300 9.300 C4.500 9.300 2 8.400 0.200 5 Z" fill="#bebebe"/><path d="M0.600 4.300 C2.300 1 4.500 0.300 6.300 0.300 C8.100 0.300 10.300 1 12 4.300" fill="none" stroke="#1e1e1e" stroke-width="0.900"/><circle cx="6.300" cy="4.800" r="2.700" fill="#202020"/><circle cx="7.200" cy="3.900" r="1" fill="#e4e4e4"/></svg>
<div class="a" style="left:524px;top:227px;width:32px;height:32px;border:1px solid #111;background-color:#fff;background-image:linear-gradient(45deg,#ccc 25%,transparent 25%,transparent 75%,#ccc 75%),linear-gradient(45deg,#ccc 25%,transparent 25%,transparent 75%,#ccc 75%);background-size:8px 8px;background-position:0 0,4px 4px"><svg style="left:0;top:0" width="30" height="30" viewBox="0 0 30 30"><defs><linearGradient id="lg" x1="0" y1="0" x2="1" y2="1"><stop offset="0" stop-color="#3c3c3c"/><stop offset="0.5" stop-color="#161616"/><stop offset="1" stop-color="#2a2a2a"/></linearGradient></defs><g transform="translate(-0.6 0) scale(0.0774)"><path d="M134.0 176.5 L140.3 167.0 L148.2 156.0 L146.0 148.7 L148.2 144.3 L156.1 137.0 L161.8 129.1 L160.3 123.4 L164.0 120.2 L172.0 115.5 L176.7 111.0 L183.0 110.7 L187.8 102.5 L192.5 103.1 L202.0 107.6 L211.5 110.1 L222.6 108.8 L235.2 103.8 L244.7 97.5 L254.2 88.0 L263.7 79.4 L273.2 72.8 L282.7 69.0 L290.6 69.0 L296.0 72.8 L301.7 81.6 L308.0 90.5 L314.3 97.5 L320.6 110.1 L323.8 118.0 L327.0 129.1 L333.3 136.0 L335.8 144.9 L341.2 152.8 L344.4 163.9 L345.0 174.0 L342.5 183.0 L334.4 193.3 L318.9 205.0 L299.4 214.7 L280.0 222.4 L264.5 232.1 L252.8 245.7 L237.3 261.3 L219.6 276.0 L203.8 283.9 L188.0 289.6 L172.2 294.0 L156.4 298.1 L140.5 302.2 L124.7 305.4 L108.9 307.6 L93.1 309.8 L77.3 310.1 L61.5 309.2 L48.8 306.0 L39.3 300.3 L33.0 291.8 L30.8 280.7 L32.0 271.2 L37.7 260.2 L48.8 247.5 L61.5 237.1 L77.3 227.0 L93.1 217.5 L108.9 206.4 L121.6 195.3 L132.6 182.7 Z" fill="url(#lg)"/><path d="M60 285 Q120 240 165 180" stroke="#6a6a6a" stroke-width="9" fill="none"/><path d="M175 170 Q230 150 260 110" stroke="#555" stroke-width="8" fill="none"/></g></svg></div>
<div class="t" style="left:565px;top:236px;color:#e6e6e6">图层 1 拷贝</div>
<div class="t" style="left:701px;top:236px;color:#cacaca;font-style:italic;font-size:15px;font-family:'Liberation Serif',serif;letter-spacing:-0.5px"><b>f</b><span style="font-family:'Liberation Sans',sans-serif;font-size:12.500px">x</span></div>
<svg style="left:539.7px;top:265.8px" width="13" height="10" viewBox="0 0 13 10"><path d="M0.200 5 C2 1.200 4.500 0.500 6.300 0.500 C8.100 0.500 10.600 1.200 12.400 5 C10.600 8.400 8.100 9.300 6.300 9.300 C4.500 9.300 2 8.400 0.200 5 Z" fill="#bebebe"/><path d="M0.600 4.300 C2.300 1 4.500 0.300 6.300 0.300 C8.100 0.300 10.300 1 12 4.300" fill="none" stroke="#1e1e1e" stroke-width="0.900"/><circle cx="6.300" cy="4.800" r="2.700" fill="#202020"/><circle cx="7.200" cy="3.900" r="1" fill="#e4e4e4"/></svg>
<div class="t" style="left:558px;top:264px;color:#d4d4d4">效果</div>
<svg style="left:556.7px;top:285.8px" width="13" height="10" viewBox="0 0 13 10"><path d="M0.200 5 C2 1.200 4.500 0.500 6.300 0.500 C8.100 0.500 10.600 1.200 12.400 5 C10.600 8.400 8.100 9.300 6.300 9.300 C4.500 9.300 2 8.400 0.200 5 Z" fill="#bebebe"/><path d="M0.600 4.300 C2.300 1 4.500 0.300 6.300 0.300 C8.100 0.300 10.300 1 12 4.300" fill="none" stroke="#1e1e1e" stroke-width="0.900"/><circle cx="6.300" cy="4.800" r="2.700" fill="#202020"/><circle cx="7.200" cy="3.900" r="1" fill="#e4e4e4"/></svg>
<div class="t" style="left:576px;top:284px;color:#d4d4d4">颜色叠加</div>
<div class="a" style="left:490px;top:300px;width:238px;height:1px;background:#232323"></div>
<div class="a" style="left:490px;top:301px;width:31px;height:39px;background:#353535;border-right:1px solid #262626"></div><div class="a" style="left:521px;top:301px;width:207px;height:39px;background:#4a5066"></div>
<div class="a" style="left:490px;top:340px;width:31px;height:37px;background:#353535;border-right:1px solid #262626"></div><div class="a" style="left:521px;top:340px;width:207px;height:37px;background:#353535"></div>
<div class="a" style="left:521px;top:340px;width:207px;height:1px;background:#262626"></div>
<svg style="left:498.7px;top:314.8px" width="13" height="10" viewBox="0 0 13 10"><path d="M0.200 5 C2 1.200 4.500 0.500 6.300 0.500 C8.100 0.500 10.600 1.200 12.400 5 C10.600 8.400 8.100 9.300 6.300 9.300 C4.500 9.300 2 8.400 0.200 5 Z" fill="#bebebe"/><path d="M0.600 4.300 C2.300 1 4.500 0.300 6.300 0.300 C8.100 0.300 10.300 1 12 4.300" fill="none" stroke="#1e1e1e" stroke-width="0.900"/><circle cx="6.300" cy="4.800" r="2.700" fill="#202020"/><circle cx="7.200" cy="3.900" r="1" fill="#e4e4e4"/></svg>
<div class="a" style="left:524px;top:304px;width:32px;height:32px;border:1px solid #0c0c0c;overflow:hidden;background-color:#fff;background-image:linear-gradient(45deg,#ccc 25%,transparent 25%,transparent 75%,#ccc 75%),linear-gradient(45deg,#ccc 25%,transparent 25%,transparent 75%,#ccc 75%);background-size:8px 8px;background-position:0 0,4px 4px"><svg style="left:0;top:0" width="30" height="30" viewBox="0 0 30 30"><g transform="translate(7.3 9.6) scale(0.0774)"><path d="M134.0 176.5 L140.3 167.0 L148.2 156.0 L146.0 148.7 L148.2 144.3 L156.1 137.0 L161.8 129.1 L160.3 123.4 L164.0 120.2 L172.0 115.5 L176.7 111.0 L183.0 110.7 L187.8 102.5 L192.5 103.1 L202.0 107.6 L211.5 110.1 L222.6 108.8 L235.2 103.8 L244.7 97.5 L254.2 88.0 L263.7 79.4 L273.2 72.8 L282.7 69.0 L290.6 69.0 L296.0 72.8 L301.7 81.6 L308.0 90.5 L314.3 97.5 L320.6 110.1 L323.8 118.0 L327.0 129.1 L333.3 136.0 L335.8 144.9 L341.2 152.8 L344.4 163.9 L345.0 174.0 L342.5 183.0 L334.4 193.3 L318.9 205.0 L299.4 214.7 L280.0 222.4 L264.5 232.1 L252.8 245.7 L237.3 261.3 L219.6 276.0 L203.8 283.9 L188.0 289.6 L172.2 294.0 L156.4 298.1 L140.5 302.2 L124.7 305.4 L108.9 307.6 L93.1 309.8 L77.3 310.1 L61.5 309.2 L48.8 306.0 L39.3 300.3 L33.0 291.8 L30.8 280.7 L32.0 271.2 L37.7 260.2 L48.8 247.5 L61.5 237.1 L77.3 227.0 L93.1 217.5 L108.9 206.4 L121.6 195.3 L132.6 182.7 Z" fill="url(#lg)"/><path d="M60 285 Q120 240 165 180" stroke="#6a6a6a" stroke-width="9" fill="none"/><path d="M175 170 Q230 150 260 110" stroke="#555" stroke-width="8" fill="none"/></g></svg></div>
<svg style="left:522px;top:302px" width="36" height="36" viewBox="0 0 36 36"><path d="M0.500 8 V0.500 H8 M28 0.500 H35.500 V8 M35.500 28 V35.500 H28 M8 35.500 H0.500 V28" fill="none" stroke="#f0f0f0" stroke-width="1"/></svg>
<div class="t" style="left:565px;top:313px;color:#f0f0f0">图层 1</div>
<div class="t" style="left:701px;top:313px;color:#dadada;font-style:italic;font-size:15px;font-family:'Liberation Serif',serif;letter-spacing:-0.5px"><b>f</b><span style="font-family:'Liberation Sans',sans-serif;font-size:12.500px">x</span></div>
<svg style="left:539.7px;top:343.8px" width="13" height="10" viewBox="0 0 13 10"><path d="M0.200 5 C2 1.200 4.500 0.500 6.300 0.500 C8.100 0.500 10.600 1.200 12.400 5 C10.600 8.400 8.100 9.300 6.300 9.300 C4.500 9.300 2 8.400 0.200 5 Z" fill="#bebebe"/><path d="M0.600 4.300 C2.300 1 4.500 0.300 6.300 0.300 C8.100 0.300 10.300 1 12 4.300" fill="none" stroke="#1e1e1e" stroke-width="0.900"/><circle cx="6.300" cy="4.800" r="2.700" fill="#202020"/><circle cx="7.200" cy="3.900" r="1" fill="#e4e4e4"/></svg>
<div class="t" style="left:558px;top:342px;color:#d4d4d4">效果</div>
<svg style="left:556.7px;top:362.8px" width="13" height="10" viewBox="0 0 13 10"><path d="M0.200 5 C2 1.200 4.500 0.500 6.300 0.500 C8.100 0.500 10.600 1.200 12.400 5 C10.600 8.400 8.100 9.300 6.300 9.300 C4.500 9.300 2 8.400 0.200 5 Z" fill="#bebebe"/><path d="M0.600 4.300 C2.300 1 4.500 0.300 6.300 0.300 C8.100 0.300 10.300 1 12 4.300" fill="none" stroke="#1e1e1e" stroke-width="0.900"/><circle cx="6.300" cy="4.800" r="2.700" fill="#202020"/><circle cx="7.200" cy="3.900" r="1" fill="#e4e4e4"/></svg>
<div class="t" style="left:576px;top:361px;color:#d4d4d4">颜色叠加</div>
<div class="a" style="left:490px;top:377px;width:238px;height:1px;background:#232323"></div>
<div class="a" style="left:490px;top:378px;width:31px;height:39px;background:#353535;border-right:1px solid #262626"></div><div class="a" style="left:521px;top:378px;width:207px;height:39px;background:#353535"></div>
<svg style="left:498.7px;top:391.8px" width="13" height="10" viewBox="0 0 13 10"><path d="M0.200 5 C2 1.200 4.500 0.500 6.300 0.500 C8.100 0.500 10.600 1.200 12.400 5 C10.600 8.400 8.100 9.300 6.300 9.300 C4.500 9.300 2 8.400 0.200 5 Z" fill="#bebebe"/><path d="M0.600 4.300 C2.300 1 4.500 0.300 6.300 0.300 C8.100 0.300 10.300 1 12 4.300" fill="none" stroke="#1e1e1e" stroke-width="0.900"/><circle cx="6.300" cy="4.800" r="2.700" fill="#202020"/><circle cx="7.200" cy="3.900" r="1" fill="#e4e4e4"/></svg>
<div class="a" style="left:524px;top:381px;width:32px;height:32px;border:1px solid #111;background:#fff"></div>
<div class="t" style="left:566px;top:390px;color:#d0d0d0;font-style:italic">背景</div>
<svg style="left:700px;top:391px" width="10" height="12" viewBox="0 0 10 12"><path d="M2.500 5.500 V3.500 Q2.500 1 5 1 Q7.500 1 7.500 3.500 V5.500" fill="none" stroke="#ccc" stroke-width="1.3"/><rect x="0.600" y="5.600" width="8.800" height="5.800" fill="none" stroke="#ccc" stroke-width="1.2"/><rect x="4.400" y="7.500" width="1.2" height="2.200" fill="#ccc"/></svg>
<div class="a" style="left:717px;top:224px;width:11px;height:39px;background:linear-gradient(#8e8e8e,#4e4e4e)"></div>
<div class="a" style="left:717px;top:301px;width:11px;height:39px;background:linear-gradient(#a0a3ac,#5c6070)"></div>
<svg style="left:719.500px;top:241px" width="6" height="4"><path d="M0 4 L3 0 L6 4 Z" fill="#222"/></svg>
<svg style="left:719.500px;top:318px" width="6" height="4"><path d="M0 4 L3 0 L6 4 Z" fill="#222"/></svg>
</body></html>
